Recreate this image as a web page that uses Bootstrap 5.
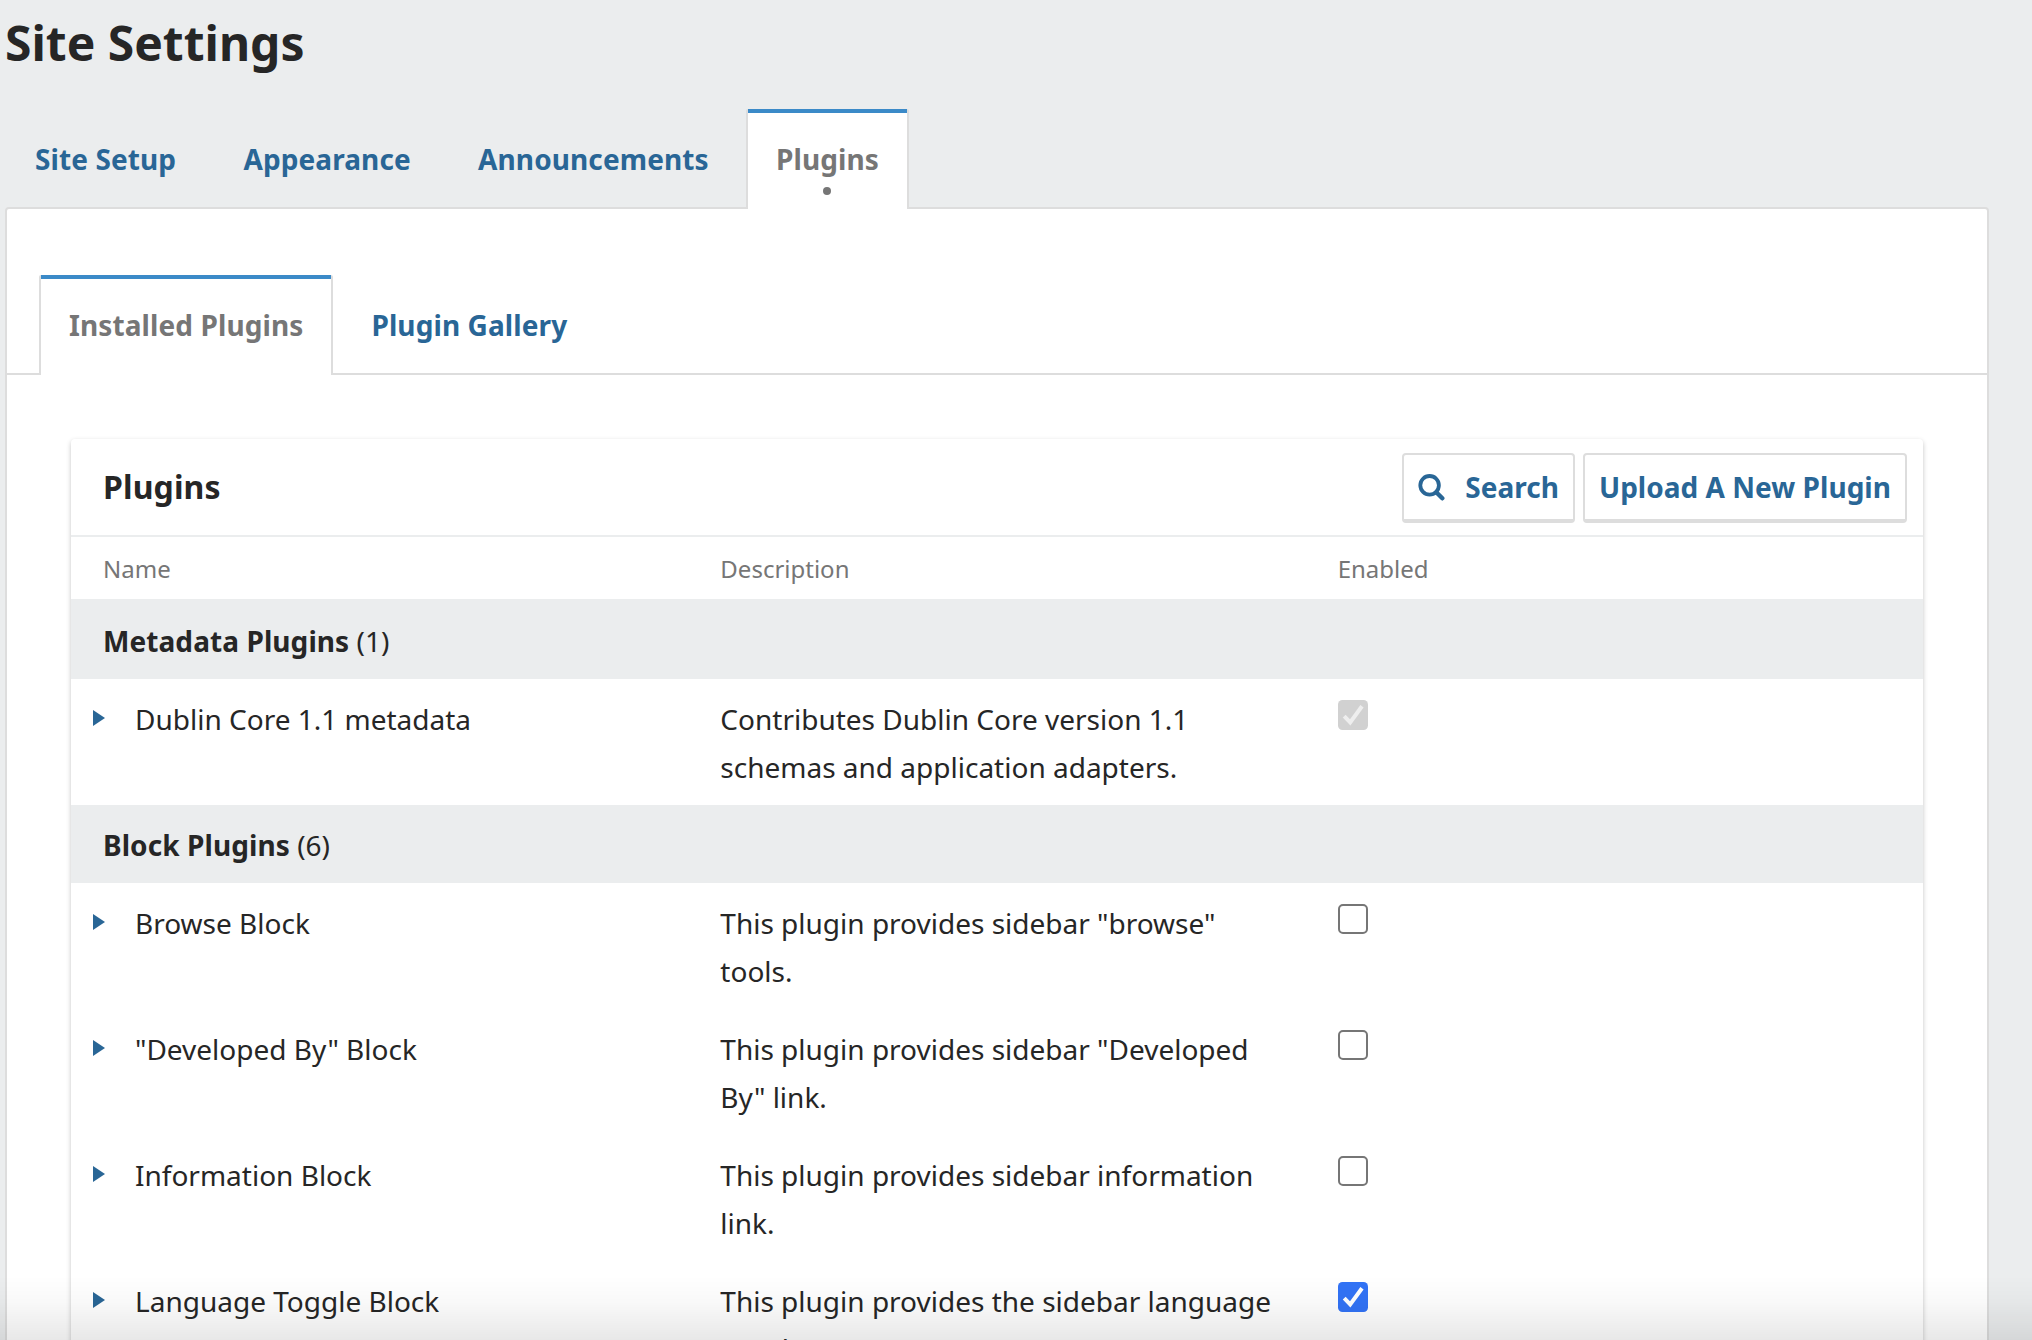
<!DOCTYPE html>
<html lang="en">
<head>
<meta charset="utf-8">
<title>Site Settings</title>
<meta name="viewport" content="width=device-width, initial-scale=1">
<link href="https://cdn.jsdelivr.net/npm/bootstrap@5.3.0/dist/css/bootstrap.min.css" rel="stylesheet">
<style>
  :root { --link: #296696; --accent: #3b8ac8; --line: #dddddd; --shade: #ebedee; --ink: #262626; --muted: #767676; }
  body { font-family: "Noto Sans", sans-serif; font-size: 28px; line-height: 48px; color: var(--ink); background: var(--shade); height: 1340px; overflow: hidden; }
  .page { width: 1984px; margin-left: 5px; }
  .page-title { font-size: 48px; line-height: 72px; font-weight: 700; padding-top: 7px; margin: 0 0 30px; }
  .tabs { gap: 8px; }
  .tabs .nav-link { height: 100px; padding: 26px 28px 0; border: 0 solid var(--line); border-width: 0 2px; border-color: transparent; border-radius: 4px; font-weight: 700; line-height: 48px; letter-spacing: .1px; color: var(--link); }
  .tabs .nav-link.active { background: linear-gradient(var(--accent) 4px, #fff 4px) padding-box; border-color: var(--line); border-radius: 2px; color: var(--muted); position: relative; }
  .tabs-main { gap: 7.3px; margin-bottom: -2px; position: relative; z-index: 1; }
  .current-dot { width: 8px; height: 8px; margin: 4px auto 0; background: var(--muted); }
  .panel { border: 2px solid var(--line); border-radius: 4px; background: #fff; height: 1300px; }
  .tabs-inner { padding: 66px 0 0 32px; border-bottom: 2px solid var(--line); }
  .tabs-inner .nav-link { margin-bottom: -2px; }
  .grid-card { margin: 64px 64px 0; border-radius: 4px; box-shadow: 0 2px 5px rgba(0,0,0,.23); height: 1000px; }
  .grid-head { height: 98px; padding: 14px 16px 0 32px; border-bottom: 2px solid var(--shade); }
  .grid-head h2 { font-size: 32px; line-height: 48px; font-weight: 700; letter-spacing: .12px; padding-top: 10px; margin: 0; }
  .action { height: 70px; padding: 0 14px; border: 2px solid var(--line); border-bottom-width: 4px; border-radius: 4px; color: var(--link); font-size: 28px; line-height: 64px; font-weight: 700; letter-spacing: .03px; }
  .action svg { width: 27px; height: 27px; margin-right: 20px; }
  .cell { padding-left: 32px; padding-right: 16px; }
  .columns-row { height: 62px; padding-top: 8px; font-size: 24px; color: var(--muted); }
  .group-row { height: 78px; padding: 16px 32px; background: var(--shade); }
  .group-row strong { letter-spacing: .08px; }
  .group-row.first-group { height: 80px; padding-top: 18px; }
  .item { height: 126px; padding-top: 16px; }
  .toggle { width: 12px; height: 16px; margin: 15px 30px 0 22px; background: var(--link); clip-path: polygon(0 0, 100% 50%, 0 100%); }
  .tick { width: 30px; height: 30px; margin: 5px 0 0; display: block; }
  .scroll-fade { height: 64px; pointer-events: none; background: linear-gradient(rgba(0,0,0,0), rgba(0,0,0,.025) 40%, rgba(0,0,0,.09)); z-index: 5; }
</style>
</head>
<body>
<main class="page">
  <h1 class="page-title">Site Settings</h1>
  <nav class="nav tabs tabs-main flex-nowrap">
    <a class="nav-link" href="#">Site Setup</a>
    <a class="nav-link" href="#">Appearance</a>
    <a class="nav-link" href="#">Announcements</a>
    <a class="nav-link active" href="#">Plugins<span class="current-dot d-block rounded-circle"></span></a>
  </nav>
  <section class="panel">
    <nav class="nav tabs tabs-inner">
      <a class="nav-link active" href="#">Installed Plugins</a>
      <a class="nav-link" href="#">Plugin Gallery</a>
    </nav>
    <div class="grid-card bg-white">
      <header class="grid-head d-flex justify-content-between align-items-start">
        <h2>Plugins</h2>
        <div class="d-flex gap-2">
          <a class="action d-flex align-items-center text-decoration-none" href="#">
            <svg viewBox="0 0 27 27" fill="none" stroke="#296696" aria-hidden="true"><circle cx="11.6" cy="11.3" r="9.3" stroke-width="3.8"/><path d="M18.3 18.2l6 6.1" stroke-width="4.4" stroke-linecap="round"/></svg>Search</a>
          <a class="action text-decoration-none" href="#">Upload A New Plugin</a>
        </div>
      </header>
      <div class="columns-row row g-0">
        <div class="col-4 cell">Name</div>
        <div class="col-4 cell">Description</div>
        <div class="col-4 cell">Enabled</div>
      </div>
      <div class="group-row first-group"><strong>Metadata Plugins</strong> (1)</div>
      <div class="item row g-0">
        <div class="col-4 d-flex"><span class="toggle"></span>Dublin Core 1.1 metadata</div>
        <div class="col-4 cell">Contributes Dublin Core version 1.1 schemas and application adapters.</div>
        <div class="col-4 cell"><svg class="tick" viewBox="0 0 30 30"><rect width="30" height="30" rx="4.5" fill="#d1d1d1"/><path d="M6.2 16.2l6 6.2L24 6.2" fill="none" stroke="#eeeeee" stroke-width="4"/></svg></div>
      </div>
      <div class="group-row"><strong>Block Plugins</strong> (6)</div>
      <div class="item row g-0">
        <div class="col-4 d-flex"><span class="toggle"></span>Browse Block</div>
        <div class="col-4 cell">This plugin provides sidebar "browse" tools.</div>
        <div class="col-4 cell"><svg class="tick" viewBox="0 0 30 30"><rect x="1" y="1" width="28" height="28" rx="4" fill="#fff" stroke="#767676" stroke-width="2"/></svg></div>
      </div>
      <div class="item row g-0">
        <div class="col-4 d-flex"><span class="toggle"></span>"Developed By" Block</div>
        <div class="col-4 cell">This plugin provides sidebar "Developed By" link.</div>
        <div class="col-4 cell"><svg class="tick" viewBox="0 0 30 30"><rect x="1" y="1" width="28" height="28" rx="4" fill="#fff" stroke="#767676" stroke-width="2"/></svg></div>
      </div>
      <div class="item row g-0">
        <div class="col-4 d-flex"><span class="toggle"></span>Information Block</div>
        <div class="col-4 cell">This plugin provides sidebar information link.</div>
        <div class="col-4 cell"><svg class="tick" viewBox="0 0 30 30"><rect x="1" y="1" width="28" height="28" rx="4" fill="#fff" stroke="#767676" stroke-width="2"/></svg></div>
      </div>
      <div class="item row g-0">
        <div class="col-4 d-flex"><span class="toggle"></span>Language Toggle Block</div>
        <div class="col-4 cell">This plugin provides the sidebar language toggler.</div>
        <div class="col-4 cell"><svg class="tick" viewBox="0 0 30 30"><rect width="30" height="30" rx="4.5" fill="#3273f6"/><path d="M6.2 16.2l6 6.2L24 6.2" fill="none" stroke="#fff" stroke-width="4"/></svg></div>
      </div>
    </div>
  </section>
</main>
<div class="scroll-fade fixed-bottom"></div>
<script src="https://cdn.jsdelivr.net/npm/bootstrap@5.3.0/dist/js/bootstrap.bundle.min.js"></script>
</body>
</html>
